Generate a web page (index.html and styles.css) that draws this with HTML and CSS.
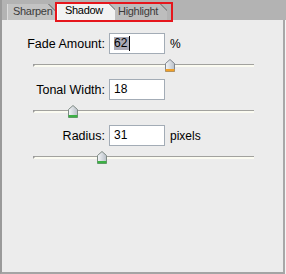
FILE: index.html
```html
<!DOCTYPE html>
<html lang="en">
<head>
  <meta charset="UTF-8">
  <title>Shadow/Highlight</title>
  <meta name="viewport" content="width=device-width, initial-scale=1.0">
  <link rel="stylesheet" href="styles.css">
</head>
<body>

  <div class="janela">
    <div class="abas">
      <div class="aba">Sharpen</div>
      <div class="aba ativa">Shadow</div>
      <div class="aba ultima">Highlight</div>
      <div class="destaque"></div>
    </div>

    <div class="painel">
      <div class="grupo">
        <div class="campo">
          <label>Fade Amount:</label>
          <div class="caixa"><span class="selecao">62</span><i class="cursor"></i></div>
          <span class="unidade">%</span>
        </div>
        <div class="slider">
          <div class="trilho"></div>
          <svg class="botao" style="left: 132px" width="10" height="13" viewBox="0 0 10 13">
            <defs>
              <linearGradient id="g1" x1="0" y1="0" x2="1" y2="0">
                <stop offset="0" stop-color="#f4f6f8"/>
                <stop offset="1" stop-color="#b9c0c8"/>
              </linearGradient>
            </defs>
            <polygon points="5,0.5 9.5,4.5 9.5,12.5 0.5,12.5 0.5,4.5" fill="url(#g1)" stroke="#80868e"/>
            <rect x="0.5" y="10" width="9" height="2.5" fill="#f0a028"/>
          </svg>
        </div>
      </div>

      <div class="grupo">
        <div class="campo">
          <label>Tonal Width:</label>
          <div class="caixa">18</div>
        </div>
        <div class="slider">
          <div class="trilho"></div>
          <svg class="botao" style="left: 35px" width="10" height="13" viewBox="0 0 10 13">
            <polygon points="5,0.5 9.5,4.5 9.5,12.5 0.5,12.5 0.5,4.5" fill="url(#g1)" stroke="#7e8a84"/>
            <rect x="0.5" y="10" width="9" height="2.5" fill="#3cb044"/>
          </svg>
        </div>
      </div>

      <div class="grupo">
        <div class="campo">
          <label>Radius:</label>
          <div class="caixa">31</div>
          <span class="unidade">pixels</span>
        </div>
        <div class="slider">
          <div class="trilho"></div>
          <svg class="botao" style="left: 64px" width="10" height="13" viewBox="0 0 10 13">
            <polygon points="5,0.5 9.5,4.5 9.5,12.5 0.5,12.5 0.5,4.5" fill="url(#g1)" stroke="#7e8a84"/>
            <rect x="0.5" y="10" width="9" height="2.5" fill="#3cb044"/>
          </svg>
        </div>
      </div>
    </div>
  </div>

</body>
</html>
```

FILE: styles.css
```css
body {
  margin: 0;
  background-color: #f4f4f4;
  font-family: 'Liberation Sans', Arial, sans-serif;
}
.janela {
  width: 286px;
  height: 274px;
}
.abas {
  position: relative;
  height: 20px;
  background-color: #b3b3b3;
  border-left: 2px solid #9a9a9a;
  display: flex;
  align-items: flex-end;
}
.aba {
  box-sizing: border-box;
  height: 16px;
  width: 48px;
  margin-left: 5px;
  padding-left: 5px;
  font-size: 11px;
  letter-spacing: -0.3px;
  line-height: 15px;
  color: #3c3c3c;
  border-left: 1px solid #dcdcdc;
  background: linear-gradient(225deg, transparent 4px, #8e8e8e 4px, #8e8e8e 5px, #c3c3c3 5px);
}
.aba.ativa {
  position: relative;
  z-index: 2;
  height: 17px;
  width: 58px;
  margin-left: 2px;
  padding-left: 7px;
  color: #000;
  border-left: 1px solid #ffffff;
  background: linear-gradient(225deg, transparent 4px, #9a9a9a 4px, #9a9a9a 5px, #f2f2f2 5px);
}
.aba.ultima {
  width: 56px;
  margin-left: -4px;
  padding-left: 7px;
  border-left: none;
  background: linear-gradient(225deg, transparent 4px, #8e8e8e 4px, #8e8e8e 5px, #bdbdbd 5px);
}
.destaque {
  position: absolute;
  left: 53px;
  top: 2px;
  width: 118px;
  height: 20px;
  box-sizing: border-box;
  border: 2px solid #e6161c;
  z-index: 3;
}
.painel {
  box-sizing: border-box;
  height: 254px;
  width: 285px;
  padding-top: 13px;
  background-color: #ececec;
  border-left: 2px solid #9a9a9a;
  border-right: 2px solid #a8a8a8;
  border-bottom: 2px solid #a4a4a4;
}
.grupo {
  margin-bottom: 7px;
}
.campo {
  display: flex;
  align-items: center;
  height: 21px;
  font-size: 12px;
}
.campo label {
  width: 103px;
  text-align: right;
  font-size: 12.5px;
  color: #000;
}
.caixa {
  box-sizing: border-box;
  margin-left: 4px;
  width: 56px;
  height: 21px;
  padding-left: 4px;
  line-height: 19px;
  background-color: #fff;
  border: 1px solid #a3acb6;
  display: flex;
  align-items: center;
}
.selecao {
  background-color: #a9a9b6;
  line-height: 13px;
  padding-right: 2px;
}
.cursor {
  width: 1px;
  height: 15px;
  background-color: #000;
}
.unidade {
  margin-left: 5px;
}
.slider {
  position: relative;
  margin-top: 5px;
  margin-left: 31px;
  width: 221px;
  height: 13px;
}
.trilho {
  position: absolute;
  left: 0;
  right: 0;
  top: 5px;
  height: 1px;
  background-color: #a2a29e;
  border-bottom: 2px solid #fbfbf1;
  border-left: 2px solid #9c9c9c;
}
.botao {
  position: absolute;
  top: 0;
}
```
